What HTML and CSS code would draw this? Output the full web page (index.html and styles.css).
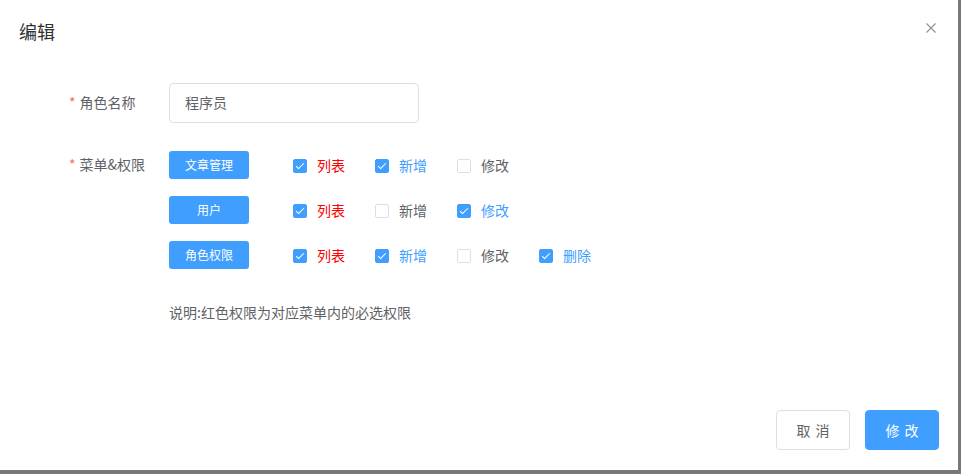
FILE: index.html
```html
<!DOCTYPE html>
<html lang="zh-CN">
<head>
<meta charset="utf-8">
<title>编辑</title>
<link rel="stylesheet" href="styles.css">
</head>
<body>
<div class="dialog">
  <div class="dialog-header">
    <span class="dialog-title">编辑</span>
    <button class="dialog-close" aria-label="关闭">
      <svg width="10" height="10" viewBox="0 0 10 10"><path d="M0.5 0.5L9.5 9.5M9.5 0.5L0.5 9.5" stroke="#909399" stroke-width="1.2" fill="none"/></svg>
    </button>
  </div>
  <div class="dialog-body">
    <div class="form">
      <div class="form-item">
        <label class="form-label"><span class="req">*</span>角色名称</label>
        <div class="form-content">
          <div class="input">程序员</div>
        </div>
      </div>
      <div class="form-item form-item-menus">
        <label class="form-label form-label-small"><span class="req">*</span>菜单&amp;权限</label>
        <div class="form-content">
          <div class="menu-row">
            <span class="menu-btn">文章管理</span>
            <div class="cb-group">
              <span class="cb"><span class="cb-box checked"></span><span class="cb-label red">列表</span></span>
              <span class="cb"><span class="cb-box checked"></span><span class="cb-label blue">新增</span></span>
              <span class="cb"><span class="cb-box"></span><span class="cb-label">修改</span></span>
            </div>
          </div>
          <div class="menu-row">
            <span class="menu-btn">用户</span>
            <div class="cb-group">
              <span class="cb"><span class="cb-box checked"></span><span class="cb-label red">列表</span></span>
              <span class="cb"><span class="cb-box"></span><span class="cb-label">新增</span></span>
              <span class="cb"><span class="cb-box checked"></span><span class="cb-label blue">修改</span></span>
            </div>
          </div>
          <div class="menu-row">
            <span class="menu-btn">角色权限</span>
            <div class="cb-group">
              <span class="cb"><span class="cb-box checked"></span><span class="cb-label red">列表</span></span>
              <span class="cb"><span class="cb-box checked"></span><span class="cb-label blue">新增</span></span>
              <span class="cb"><span class="cb-box"></span><span class="cb-label">修改</span></span>
              <span class="cb"><span class="cb-box checked"></span><span class="cb-label blue">删除</span></span>
            </div>
          </div>
          <p class="note">说明:红色权限为对应菜单内的必选权限</p>
        </div>
      </div>
    </div>
  </div>
  <div class="dialog-footer">
    <button class="btn btn-default">取 消</button>
    <button class="btn btn-primary">修 改</button>
  </div>
</div>
</body>
</html>
```
FILE: styles.css
```css
* { box-sizing: border-box; }
html, body {
  margin: 0;
  padding: 0;
  background: #787878;
  font-family: "Noto Sans CJK SC", "Noto Sans", "Liberation Sans", sans-serif;
}
.dialog {
  width: 958px;
  height: 470px;
  background: #fff;
  display: flex;
  flex-direction: column;
  position: relative;
}
.dialog-header {
  padding: 19px 20px 11px 19px;
  position: relative;
}
.dialog-title {
  font-size: 18px;
  line-height: 24px;
  color: #303133;
  display: block;
}
.dialog-close {
  position: absolute;
  top: 23px;
  right: 22px;
  width: 10px;
  height: 10px;
  padding: 0;
  border: 0;
  background: none;
  display: flex;
}
.dialog-body {
  padding: 29px 20px 0 69px;
}
.form-item {
  display: flex;
}
.form-item-menus {
  margin-top: 28px;
}
.form-label {
  width: 100px;
  flex: none;
  font-size: 14px;
  line-height: 39px;
  color: #606266;
}
.form-label-small {
  line-height: 27px;
}
.req {
  color: #F56C6C;
  margin-right: 4px;
}
.input {
  width: 250px;
  height: 40px;
  border: 1px solid #DCDFE6;
  border-radius: 4px;
  padding: 0 15px;
  font-size: 14px;
  line-height: 37px;
  color: #606266;
}
.form-content {
  display: flex;
  flex-direction: column;
  gap: 17px;
}
.menu-row {
  display: flex;
  align-items: center;
  height: 28px;
}
.menu-btn {
  width: 80px;
  height: 28px;
  background: #409EFF;
  color: #fff;
  border-radius: 3px;
  font-size: 12px;
  line-height: 27px;
  text-align: center;
  margin-right: 44px;
  flex: none;
}
.cb-group {
  display: flex;
  align-items: center;
  gap: 30px;
  padding-top: 1px;
}
.cb {
  display: flex;
  align-items: center;
}
.cb-box {
  width: 14px;
  height: 14px;
  border: 1px solid #DCDFE6;
  border-radius: 2px;
  background: #fff;
  position: relative;
  flex: none;
}
.cb-box.checked {
  background: #409EFF;
  border-color: #409EFF;
}
.cb-box.checked::after {
  content: "";
  position: absolute;
  left: 4px;
  top: 1px;
  width: 3px;
  height: 7px;
  border: 1px solid #fff;
  border-left: 0;
  border-top: 0;
  transform: rotate(45deg);
}
.cb-label {
  padding-left: 10px;
  font-size: 14px;
  line-height: 17px;
  color: #606266;
}
.cb-label.red { color: #FF0000; }
.cb-label.blue { color: #409EFF; }
.note {
  margin: 16px 0 0;
  font-size: 14px;
  line-height: 20px;
  color: #606266;
}
.dialog-footer {
  margin-top: auto;
  padding: 0 19px 20px 20px;
  display: flex;
  justify-content: flex-end;
  gap: 15px;
}
.btn {
  width: 74px;
  height: 40px;
  border-radius: 4px;
  font-size: 14px;
  font-family: inherit;
  word-spacing: 2px;
  padding: 0;
  cursor: pointer;
}
.btn-default {
  background: #fff;
  border: 1px solid #DCDFE6;
  color: #606266;
}
.btn-primary {
  background: #409EFF;
  border: 1px solid #409EFF;
  color: #fff;
}
```
